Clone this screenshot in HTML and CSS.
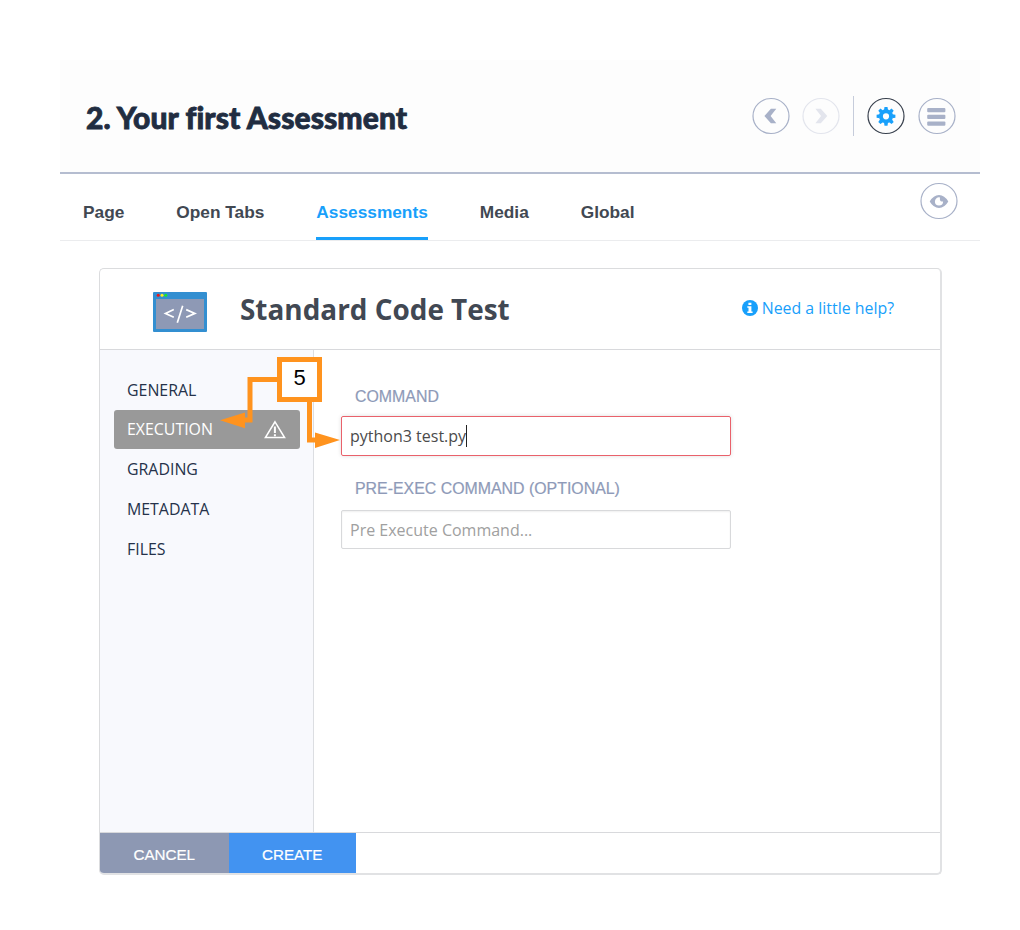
FILE: index.html
```html
<!DOCTYPE html>
<html lang="en">
<head>
<meta charset="utf-8">
<title>Your first Assessment</title>
<link rel="stylesheet" href="styles.css">
</head>
<body>
<main class="page">
  <header class="top">
    <h1 class="title">2. Your first Assessment</h1>
    <div class="tools">
      <svg class="round" viewBox="0 0 38 38"><ellipse cx="19" cy="19" rx="18" ry="17.5"/><path class="fill" d="M18.9 11.8h5.4L18.6 19l5.7 7.2h-5.4L12.4 19z"/></svg>
      <svg class="round faint" viewBox="0 0 38 38"><ellipse cx="19" cy="19" rx="18" ry="17.5"/><path class="fill" d="M18.8 11.8h-5.4L19.1 19l-5.7 7.2h5.4L25.3 19z"/></svg>
      <span class="divider"></span>
      <svg class="round active" viewBox="0 0 38 38"><ellipse cx="19" cy="19" rx="18" ry="17.5"/>
        <g class="fill" transform="translate(19 19.3)"><path fill-rule="evenodd" d="M-7 0a7 7 0 1 0 14 0a7 7 0 1 0-14 0M-3.1 0a3.1 3.1 0 1 0 6.2 0a3.1 3.1 0 1 0-6.2 0"/><path id="tooth" d="M-2-6.3-1.5-9.4h3L2-6.3z"/><use href="#tooth" transform="rotate(45)"/><use href="#tooth" transform="rotate(90)"/><use href="#tooth" transform="rotate(135)"/><use href="#tooth" transform="rotate(180)"/><use href="#tooth" transform="rotate(225)"/><use href="#tooth" transform="rotate(270)"/><use href="#tooth" transform="rotate(315)"/></g></svg>
      <svg class="round" viewBox="0 0 38 38"><ellipse cx="19" cy="19" rx="18" ry="17.5"/><g class="fill"><rect x="9.2" y="11" width="18.2" height="4.2" rx="1"/><rect x="9.2" y="17.8" width="18.2" height="4.2" rx="1"/><rect x="9.2" y="24.6" width="18.2" height="4.2" rx="1"/></g></svg>
    </div>
  </header>
  <nav class="tabs">
    <a class="tab">Page</a><a class="tab">Open Tabs</a><a class="tab selected">Assessments</a><a class="tab">Media</a><a class="tab">Global</a>
    <svg class="round eye" viewBox="0 0 38 38"><ellipse cx="19" cy="19" rx="18" ry="17.5"/><path class="fill" fill-rule="evenodd" d="M9.7 19.5Q13.5 13 19 13t9.3 6.5Q24.5 26 19 26t-9.3-6.5zM14.9 19.5a4.1 4.1 0 1 0 8.2 0q-1.2.2-2.7-.5-.9-1.7-.4-3.5a4.1 4.1 0 0 0-5.1 4z"/></svg>
  </nav>
  <section class="card">
    <div class="card-head">
      <svg class="code-icon" viewBox="0 0 54 40"><rect width="54" height="40" rx="1" fill="#338fd1"/><path d="M3 7h48v30H3z" fill="#8e99b5"/><circle cx="5.2" cy="3.3" r="1.5" fill="#f01616"/><circle cx="9" cy="3.3" r="1.5" fill="#fff01b"/><circle cx="12.8" cy="3.3" r="1.5" fill="#19eb26"/><path d="M20.8 17.6 12.5 21.4l8.3 3.9M33.2 17.6l8.7 3.8-8.7 3.9M29.7 13.8 24.3 30.8" fill="none" stroke="#fff" stroke-width="1.7"/></svg>
      <h2 class="card-title">Standard Code Test</h2>
      <a class="help"><svg class="info" viewBox="0 0 16 16"><circle cx="8" cy="8" r="8" fill="#18a0fb"/><path d="M6.4 2.8h3v2.3h-3zM5.3 6.3h4.1v5.2h1.2V13H5.3v-1.5h1.2V7.8H5.3z" fill="#fff"/></svg>Need a little help?</a>
    </div>
    <div class="card-body">
      <ul class="menu">
        <li class="item">GENERAL</li>
        <li class="item current">EXECUTION<svg class="warn" viewBox="0 0 22 19"><path d="M11 1.8 20.6 17.6H1.4z" fill="none" stroke="#fff" stroke-width="1.5"/><path d="M10.9 6.4v6.5M10.9 14.2v2" stroke="#fff" stroke-width="2"/></svg></li>
        <li class="item">GRADING</li>
        <li class="item">METADATA</li>
        <li class="item">FILES</li>
      </ul>
      <div class="form">
        <div class="label">COMMAND</div>
        <div class="field invalid"><span class="typed">python3 test.py</span><span class="caret"></span></div>
        <div class="label second">PRE-EXEC COMMAND (OPTIONAL)</div>
        <div class="field"><span class="hint">Pre Execute Command...</span></div>
      </div>
    </div>
    <footer class="actions"><span class="button cancel">CANCEL</span><span class="button create">CREATE</span></footer>
    <div class="callout">
      <svg class="callout-lines" viewBox="0 0 122 96"><path d="M58 23.5H30V64H24M89.5 46V84h6" fill="none" stroke="#ff931e" stroke-width="5"/><path d="M0 64.2 25 56.5V72.2zM95 76.5 120 84 95 92z" fill="#ff931e"/></svg>
      <span class="step">5</span>
    </div>
  </section>
</main>
</body>
</html>
```
FILE: styles.css
```css
* { box-sizing: border-box; }
body { margin: 0; background: #fff; font-family: "Noto Sans", sans-serif; }
.page { width: 920px; margin: 60px 0 0 60px; }
.top { height: 114px; padding: 0 24px 0 26px; background: #fdfdfd; border-bottom: 2px solid #b5bdd0; display: flex; justify-content: space-between; align-items: center; }
.title { margin: 2px 0 0; color: #212d41; font: 900 30px/40px Lato, sans-serif; letter-spacing: 0.08px; -webkit-text-stroke: 0.8px #212d41; white-space: nowrap; }
.tools { display: flex; align-items: center; }
.round { display: block; width: 38px; height: 38px; flex: none; fill: none; stroke: #a8b1c8; stroke-width: 1.2; color: #a8b1c8; }
.round .fill { fill: currentColor; stroke: none; }
.faint { margin-left: 12px; stroke: #e3e5ed; color: #e3e5ed; }
.divider { width: 1px; height: 40px; margin: 0 13px 0 13px; background: #c6ccdb; }
.active { margin-right: 13px; stroke: #39414e; color: #18a0fb; }
.tabs { height: 67px; padding: 0 22px 0 23px; display: flex; align-items: flex-start; gap: 52px; border-bottom: 1px solid #ebecee; }
.tab { height: 66px; padding-top: 28px; color: #414852; font: bold 17.3px/20px "Liberation Sans", Arial, sans-serif; white-space: nowrap; }
.selected { color: #18a0fb; border-bottom: 3px solid #18a0fb; }
.eye { margin: 8px 0 0 auto; }
.card { position: relative; width: 843px; height: 607px; margin: 27px 0 0 39px; border: 1px solid #dbdcde; border-right: 2px solid #e1e2e4; border-bottom: 2px solid #e1e2e4; border-radius: 5px; display: flex; flex-direction: column; overflow: hidden; }
.card-head { height: 81px; flex: none; display: flex; align-items: center; padding: 0 46px 0 53px; border-bottom: 1px solid #d8d9dc; }
.code-icon { width: 54px; height: 40px; margin-top: 6px; }
.card-title { margin: 0 auto 0 33px; color: #414853; font: bold 27.9px/38px "Open Sans", sans-serif; white-space: nowrap; }
.help { display: flex; align-items: center; margin-top: -2px; color: #18a0fb; font: 15.9px/22px "Open Sans", sans-serif; white-space: nowrap; }
.info { width: 16px; height: 16px; margin-right: 4px; }
.card-body { flex: 1; display: flex; }
.menu { list-style: none; width: 214px; margin: 0; padding: 20px 13.5px 0 14px; background: #f8f9fd; border-right: 1px solid #dcdee2; }
.item { height: 39px; margin-bottom: 0.8px; padding: 0 14px 0 13px; display: flex; align-items: center; justify-content: space-between; color: #25324a; font: 15.9px/22px "Open Sans", sans-serif; border-radius: 3px; }
.current { background: #999; color: #fff; }
.warn { width: 22px; height: 19px; }
.form { padding: 37px 0 0 27px; }
.label { height: 20px; margin-left: 14px; color: #8e9ab8; font: 15.9px/20px "Liberation Sans", Arial, sans-serif; white-space: nowrap; -webkit-text-stroke: 0.2px #8e9ab8; }
.second { margin-top: 23px; }
.field { width: 390px; height: 39px; margin-top: 11px; padding: 0 8px; display: flex; align-items: center; border: 1px solid #d8d9db; border-radius: 2px; font: 16px/22px "Open Sans", sans-serif; box-shadow: inset 0 1px 2px #0001; }
.invalid { border-color: #e9616b; height: 40px; margin-top: 9px; box-shadow: 0 0 4px #0002; }
.typed { color: #4b4b4b; }
.hint { color: #a0a0a0; }
.caret { width: 1px; height: 22px; background: #222; }
.actions { height: 41px; flex: none; border-top: 1px solid #d8d9dc; display: flex; }
.button { width: 128px; text-align: center; color: #fff; font: 15.2px/43px "Liberation Sans", Arial, sans-serif; }
.button { height: 40px; }
.cancel { width: 128.5px; background: #8d98b3; -webkit-text-stroke: 0.2px #fff; }
.create { width: 127.5px; background: #4293f1; -webkit-text-stroke: 0.2px #fff; }
.callout { position: absolute; left: 120px; top: 87px; width: 122px; height: 96px; }
.callout-lines { display: block; width: 122px; height: 96px; }
.step { position: absolute; left: 57px; top: 1px; width: 45px; height: 45px; border: 5px solid #ff931e; background: #fff; color: #000; font: 22px/32px "Liberation Sans", Arial, sans-serif; text-align: center; }
```
